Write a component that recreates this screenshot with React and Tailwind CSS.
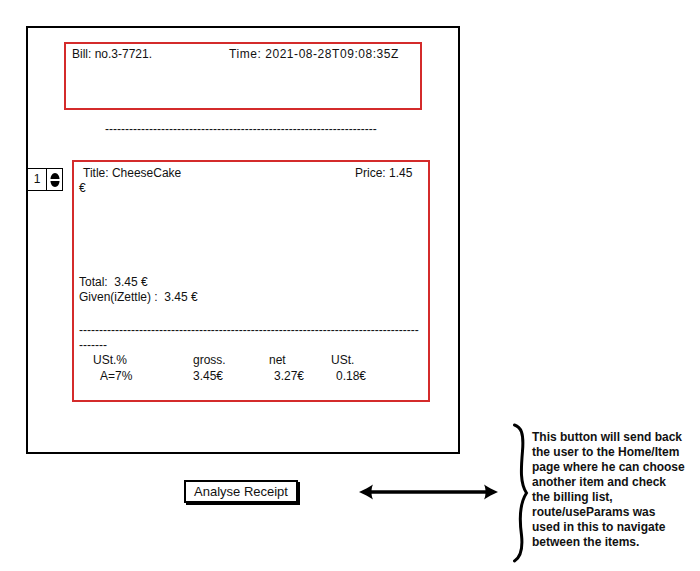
import React from "react";

// wireframe of the receipt page, with a note about the button

const dashes = (n) => "-".repeat(n);

function Stepper() {
  return (
    <div className="flex h-[23px] w-[36px] border-[1.5px] border-black bg-white">
      <div className="flex w-[19px] items-center justify-center border-r-[1.5px] border-black text-[12px]">
        1
      </div>
      <div className="flex flex-1 items-center justify-center">
        <svg width="10" height="16" viewBox="0 0 10 16">
          <path d="M5 1 C7.5 1 9.5 4 9.5 7 L0.5 7 C0.5 4 2.5 1 5 1 Z" fill="#000" />
          <path d="M5 15 C7.5 15 9.5 12 9.5 9 L0.5 9 C0.5 12 2.5 15 5 15 Z" fill="#000" />
        </svg>
      </div>
    </div>
  );
}

function DoubleArrow() {
  return (
    <svg width="139" height="16" viewBox="0 0 139 16">
      <path d="M8 8 L131 8" stroke="#000" strokeWidth="3.5" />
      <path d="M0 8 C5 6 10 3 14 0.5 C12 4 12 12 14 15.5 C10 13 5 10 0 8 Z" fill="#000" />
      <path d="M139 8 C134 6 129 3 125 0.5 C127 4 127 12 125 15.5 C129 13 134 10 139 8 Z" fill="#000" />
    </svg>
  );
}

function Brace() {
  return (
    <svg width="16" height="140" viewBox="0 0 16 140">
      <path
        d="M1.5 2 C8 4 11 10 9.5 28 C8 46 7 60 13.5 70 C7 80 6 94 8.5 112 C10 126 8 134 1.5 138"
        fill="none"
        stroke="#000"
        strokeWidth="3"
        strokeLinecap="round"
      />
    </svg>
  );
}

export default function App() {
  return (
    <div className="flex h-[571px] w-[700px] overflow-hidden bg-white font-['Liberation_Sans',Arial,sans-serif] text-[12px] leading-[15px] text-[#111]">
      <div className="w-[500px] shrink-0 pl-[26px] pt-[26px]">
        <div className="h-[428px] w-[434px] border-2 border-black">
          <div className="ml-[36px] mt-[14px] h-[68px] w-[358px] border-2 border-[#d42b2b] pl-[6px] pt-[3px]">
            <div className="flex">
              <span className="w-[157px]">Bill: no.3-7721.</span>
              <span className="tracking-[0.55px]">Time: 2021-08-28T09:08:35Z</span>
            </div>
          </div>

          <div className="ml-[77px] mt-[12px] whitespace-nowrap">{dashes(68)}</div>

          <div className="mt-[23px] flex items-start">
            <div className="-ml-[1px] mt-[8px]">
              <Stepper />
            </div>
            <div className="ml-[9px] h-[242px] w-[358px] border-2 border-[#d42b2b] pl-[5px] pt-[4px]">
              <div className="flex">
                <span className="ml-[4px] w-[272px]">Title: CheeseCake</span>
                <span>Price: 1.45</span>
              </div>
              <div>€</div>

              <div className="mt-[79px]">Total:&nbsp; 3.45 €</div>
              <div>Given(iZettle) :&nbsp; 3.45 €</div>

              <div className="mt-[18px] whitespace-nowrap">{dashes(85)}</div>
              <div>{dashes(7)}</div>

              <div className="flex">
                <span className="ml-[14px] w-[100px]">USt.%</span>
                <span className="w-[76px]">gross.</span>
                <span className="w-[62px]">net</span>
                <span>USt.</span>
              </div>
              <div className="mt-[1px] flex">
                <span className="ml-[21px] w-[93px]">A=7%</span>
                <span className="w-[81px]">3.45€</span>
                <span className="w-[62px]">3.27€</span>
                <span>0.18€</span>
              </div>
            </div>
          </div>
        </div>

        <div className="mt-[26px] flex items-center">
          <button className="ml-[158px] h-[23px] w-[114px] border-2 border-black bg-white text-[13px] leading-[19px] shadow-[2px_2px_0_#000]">
            Analyse Receipt
          </button>
          <div className="ml-[61px] flex">
            <DoubleArrow />
          </div>
        </div>
      </div>

      <div className="flex items-start pl-[13px] pt-[423px]">
        <Brace />
        <div className="ml-[3px] mt-[7px] whitespace-nowrap font-bold">
          This button will send back
          <br />
          the user to the Home/Item
          <br />
          page where he can choose
          <br />
          another item and check
          <br />
          the billing list,
          <br />
          route/useParams was
          <br />
          used in this to navigate
          <br />
          between the items.
        </div>
      </div>
    </div>
  );
}
